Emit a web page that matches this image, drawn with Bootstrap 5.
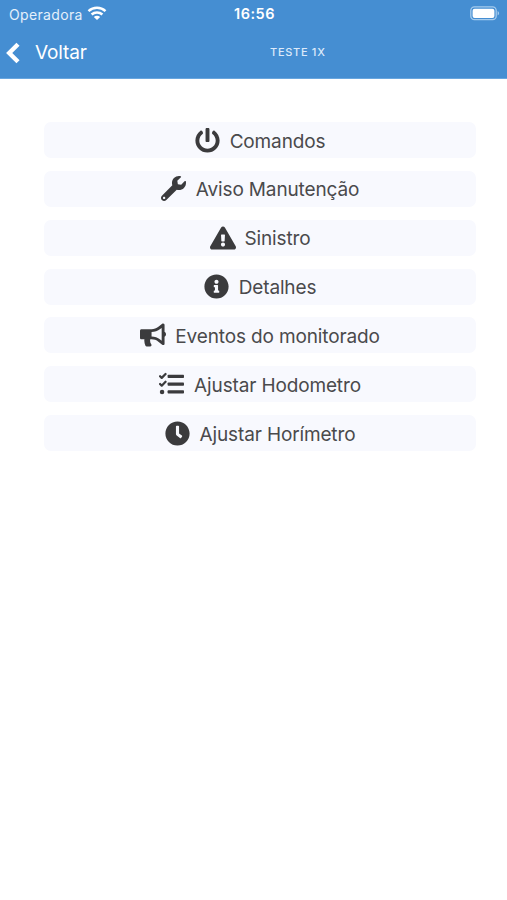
<!DOCTYPE html>
<html lang="pt-BR">
<head>
<meta charset="utf-8">
<meta name="viewport" content="width=device-width, initial-scale=1">
<title>TESTE 1X</title>
<link rel="stylesheet" href="https://cdn.jsdelivr.net/npm/bootstrap@5.3.0/dist/css/bootstrap.min.css">
<style>
body{font-family:Inter,"Liberation Sans",sans-serif;background:#fff}
.app-header{background:#458ed2;height:79px;border-bottom:1px solid #68a6df}
.status-bar{height:27px;font-size:14px;padding:0 7px 0 9px}
.status-bar>*{flex:1 1 0}
.carrier{color:#e4f0fb;letter-spacing:.35px}
.carrier span,.clock-text{padding-top:1px}
.clock-text{font-size:14.5px;letter-spacing:.5px}
.title-bar{height:51px;padding-left:6px}
.back-link{width:264px;font-size:19px;letter-spacing:-.15px;gap:15px}
.back-link span{padding-top:2px}
.page-title{font-size:11px;letter-spacing:.7px;color:#dceafa}
.menu-list{padding:43px 31px 0 44px;gap:12.85px}
.menu-btn{height:36px;background:#f8f9fe;color:#4a4a4c;border:0;border-radius:7px;font-size:19px;letter-spacing:-.14px;line-height:1;gap:10px;padding:0}
.menu-btn:hover{background:#eef1fc;color:#4a4a4c}
.menu-btn span{padding-top:2px}
.menu-btn svg{height:25px;width:25px;fill:#3b3b3d;flex:none}
.menu-btn svg.wide{width:26px;height:24px;margin-right:-1px}
</style>
<script src="https://cdn.jsdelivr.net/npm/bootstrap@5.3.0/dist/js/bootstrap.bundle.min.js"></script>
</head>
<body>
<header class="app-header text-white">
  <div class="status-bar d-flex align-items-center">
    <div class="carrier d-flex align-items-center"><span>Operadora</span>
      <svg class="ms-1" width="20" height="15" viewBox="0 0 20 15" fill="none" stroke="#fff" stroke-width="2.5"><path d="M1.5 5.2C6.3.7 13.7.7 18.5 5.2M4.6 8.5c3.1-2.8 7.7-2.8 10.8 0"/><path d="M10 14 6.8 10.9c1.8-1.6 4.6-1.6 6.4 0z" fill="#fff" stroke="none"/></svg>
    </div>
    <div class="clock-text text-center fw-semibold">16:56</div>
    <div class="d-flex justify-content-end"><svg width="30" height="15" viewBox="0 0 30 15"><rect x=".8" y=".9" width="25.4" height="12.8" rx="3.6" fill="none" stroke="#a5cbed" stroke-width="1.3"/><rect x="2.6" y="2.7" width="21.8" height="9.2" rx="2" fill="#fff"/><path d="M27.6 5.1v4.4c2-.8 2-3.6 0-4.4z" fill="#a5cbed"/></svg></div>
  </div>
  <nav class="title-bar d-flex align-items-center">
    <a href="#" class="back-link d-flex align-items-center text-white text-decoration-none"><svg width="14" height="22" viewBox="0 0 14 22" fill="none" stroke="#fff" stroke-width="4.4"><path d="M12 2.2 3.2 11l8.8 8.8"/></svg><span>Voltar</span></a>
    <span class="page-title fw-medium text-nowrap">TESTE 1X</span>
  </nav>
</header>
<main class="menu-list d-flex flex-column">
  <button class="menu-btn btn d-flex align-items-center justify-content-center"><svg viewBox="0 0 512 512"><path d="M400 54.1c63 45 104 118.6 104 201.9 0 136.8-110.8 247.7-247.5 248C120 504.3 8.2 393 8 256.4 7.9 173.1 48.9 99.3 111.8 54.2c11.7-8.3 28-4.8 35 7.7L162.6 90c5.9 10.5 3.1 23.8-6.6 31-41.5 30.8-68 79.6-68 134.9-.1 92.3 74.5 168.1 168 168.1 91.6 0 168.6-74.2 168-169.1-.3-51.8-24.7-101.8-68.1-134-9.7-7.2-12.4-20.5-6.5-30.9l15.8-28.1c7-12.4 23.2-16.1 34.8-7.8zM296 264V24c0-13.3-10.7-24-24-24h-32c-13.3 0-24 10.7-24 24v240c0 13.3 10.7 24 24 24h32c13.3 0 24-10.7 24-24z"/></svg><span>Comandos</span></button>
  <button class="menu-btn btn d-flex align-items-center justify-content-center"><svg viewBox="0 0 512 512"><path d="M507.73 109.1c-2.24-9.03-13.54-12.09-20.12-5.51l-74.36 74.36-67.88-11.31-11.31-67.88 74.36-74.36c6.62-6.62 3.43-17.9-5.66-20.16-47.38-11.74-99.55.91-136.58 37.93-39.64 39.64-50.55 97.1-34.05 147.2L18.74 402.76c-24.99 24.99-24.99 65.51 0 90.5 24.99 24.99 65.51 24.99 90.5 0l213.21-213.21c50.12 16.71 107.47 5.68 147.37-34.22 37.07-37.07 49.7-89.32 37.91-136.73zM64 472c-13.25 0-24-10.75-24-24 0-13.26 10.75-24 24-24s24 10.74 24 24c0 13.25-10.75 24-24 24z"/></svg><span>Aviso Manutenção</span></button>
  <button class="menu-btn btn d-flex align-items-center justify-content-center"><svg class="wide" viewBox="0 0 576 512"><path d="M569.517 440.013C587.975 472.007 564.806 512 527.94 512H48.054c-36.937 0-59.999-40.055-41.577-71.987L246.423 23.985c18.467-32.009 64.72-31.951 83.154 0l239.94 416.028zM288 354c-25.405 0-46 20.595-46 46s20.595 46 46 46 46-20.595 46-46-20.595-46-46-46zm-43.673-165.346l7.418 136c.347 6.364 5.609 11.346 11.982 11.346h48.546c6.373 0 11.635-4.982 11.982-11.346l7.418-136c.375-6.874-5.098-12.654-11.982-12.654h-63.383c-6.884 0-12.356 5.78-11.981 12.654z"/></svg><span>Sinistro</span></button>
  <button class="menu-btn btn d-flex align-items-center justify-content-center"><svg viewBox="0 0 512 512"><path d="M256 8C119.043 8 8 119.083 8 256c0 136.997 111.043 248 248 248s248-111.003 248-248C504 119.083 392.957 8 256 8zm0 110c23.196 0 42 18.804 42 42s-18.804 42-42 42-42-18.804-42-42 18.804-42 42-42zm56 254c0 6.627-5.373 12-12 12h-88c-6.627 0-12-5.373-12-12v-24c0-6.627 5.373-12 12-12h12v-64h-12c-6.627 0-12-5.373-12-12v-24c0-6.627 5.373-12 12-12h64c6.627 0 12 5.373 12 12v100h12c6.627 0 12 5.373 12 12v24z"/></svg><span>Detalhes</span></button>
  <button class="menu-btn btn d-flex align-items-center justify-content-center"><svg class="wide" viewBox="0 0 576 512"><path d="M576 240c0-23.63-12.95-44.04-32-55.12V32.01C544 23.26 537.02 0 512 0c-7.12 0-14.19 2.38-19.98 7.02l-85.03 68.03C364.28 109.19 310.66 128 256 128H32c-18 0-32 14-32 32v160c0 18 14 32 32 32h65.7c-1.39 10.48-2.18 21.14-2.18 32 0 39.77 9.26 77.35 25.56 110.94 5.19 10.69 16.52 17.06 28.4 17.06h74.28c26.05 0 41.69-29.84 25.9-50.56-16.4-21.52-26.15-48.36-26.15-77.44 0-11.11 1.62-21.79 4.41-32H256c54.66 0 108.28 18.81 150.98 52.95l85.03 68.03a32.023 32.023 0 0 0 19.98 7.02c24.92 0 32-22.78 32-32V295.13C563.05 284.04 576 263.63 576 240zm-96 141.42l-33.05-26.44C392.95 311.78 325.12 288 256 288v-96c69.12 0 136.95-23.78 190.95-66.98L480 98.58v282.84z"/></svg><span>Eventos do monitorado</span></button>
  <button class="menu-btn btn d-flex align-items-center justify-content-center"><svg viewBox="0 0 512 512"><rect x="176" y="56" width="336" height="66" rx="16"/><rect x="176" y="216" width="336" height="66" rx="16"/><rect x="176" y="376" width="336" height="66" rx="16"/><circle cx="63" cy="409" r="46"/><path d="m22 86 34 34 78-80M22 246l34 34 78-80" fill="none" stroke="#3b3b3d" stroke-width="46" stroke-linejoin="round" stroke-linecap="round"/></svg><span>Ajustar Hodometro</span></button>
  <button class="menu-btn btn d-flex align-items-center justify-content-center"><svg viewBox="0 0 512 512"><path d="M256,8C119,8,8,119,8,256S119,504,256,504,504,393,504,256,393,8,256,8Zm92.49,313h0l-20,25a16,16,0,0,1-22.49,2.5h0l-67-49.72a40,40,0,0,1-15-31.23V112a16,16,0,0,1,16-16h32a16,16,0,0,1,16,16V256l58,42.5A16,16,0,0,1,348.49,321Z"/></svg><span>Ajustar Horímetro</span></button>
</main>
</body>
</html>
